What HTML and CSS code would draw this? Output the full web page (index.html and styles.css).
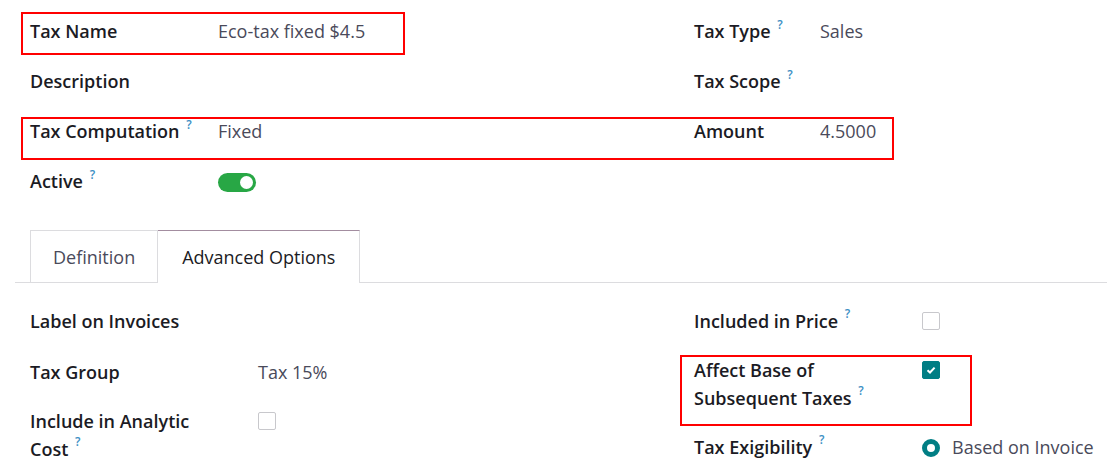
FILE: index.html
```html
<!DOCTYPE html>
<html lang="en">
<head>
    <meta charset="UTF-8">
    <title>Tax - Eco-tax fixed $4.5</title>
    <link rel="stylesheet" href="styles.css">
</head>
<body>
    <div class="sheet">
        <div class="group top">
            <div class="col">
                <div class="row"><span class="label">Tax Name</span><span class="value">Eco-tax fixed $4.5</span></div>
                <div class="row"><span class="label">Description</span><span class="value"></span></div>
                <div class="row"><span class="label">Tax Computation <sup class="tip">?</sup></span><span class="value">Fixed</span></div>
                <div class="row"><span class="label">Active <sup class="tip">?</sup></span><span class="value"><span class="toggle"></span></span></div>
            </div>
            <div class="col right">
                <div class="row"><span class="label">Tax Type <sup class="tip">?</sup></span><span class="value">Sales</span></div>
                <div class="row"><span class="label">Tax Scope <sup class="tip">?</sup></span><span class="value"></span></div>
                <div class="row"><span class="label">Amount</span><span class="value">4.5000</span></div>
            </div>
        </div>

        <div class="tabs">
            <div class="tab">Definition</div>
            <div class="tab active">Advanced Options</div>
        </div>

        <div class="group bottom">
            <div class="col">
                <div class="row first"><span class="label">Label on Invoices</span><span class="value"></span></div>
                <div class="row"><span class="label">Tax Group</span><span class="value">Tax 15%</span></div>
                <div class="row"><span class="label"><span>Include in Analytic</span> <span>Cost</span> <sup class="tip">?</sup></span><span class="value"><span class="check"></span></span></div>
            </div>
            <div class="col right">
                <div class="row"><span class="label">Included in Price <sup class="tip">?</sup></span><span class="value"><span class="check"></span></span></div>
                <div class="row"><span class="label"><span>Affect Base of</span> <span>Subsequent Taxes</span> <sup class="tip">?</sup></span><span class="value"><span class="check on"><svg width="10" height="8" viewBox="0 0 10 8"><path d="M1.5 4.2 L4 6.5 L8.6 1.6" fill="none" stroke="#fff" stroke-width="2"/></svg></span></span></div>
                <div class="row"><span class="label">Tax Exigibility <sup class="tip">?</sup></span><span class="value"><span class="radio"></span>Based on Invoice</span></div>
            </div>
        </div>

        <div class="mark mark-name"></div>
        <div class="mark mark-amount"></div>
        <div class="mark mark-affect"></div>
    </div>
</body>
</html>
```

FILE: styles.css
```css
body {
    margin: 0;
    background: #fff;
    font-family: 'Open Sans', sans-serif;
    font-size: 18px;
    color: #1f1f2b;
}
.sheet {
    position: relative;
    padding-top: 18px;
}
.group {
    display: grid;
    grid-template-columns: 664px 1fr;
    padding-left: 30px;
}
.col {
    display: flex;
    flex-direction: column;
}
.row {
    display: flex;
    align-items: flex-start;
    line-height: 26px;
    margin-bottom: 24px;
}
.label {
    font-weight: 600;
    color: #1b1b24;
    width: 188px;
    flex-shrink: 0;
}
.right .label {
    width: 126px;
}
.value {
    color: #4a4a5a;
    min-height: 26px;
}
.tip {
    color: #3c8fc4;
    font-size: 12px;
    line-height: 1;
    font-weight: 600;
    vertical-align: top;
    position: relative;
    top: 1px;
    margin-left: 2px;
}

/* toggle */
.toggle {
    display: inline-block;
    width: 38px;
    height: 19px;
    border-radius: 10px;
    background: #28a745;
    position: relative;
    vertical-align: middle;
    margin-top: -2px;
}
.toggle::after {
    content: '';
    position: absolute;
    right: 3px;
    top: 3px;
    width: 13px;
    height: 13px;
    border-radius: 50%;
    background: #fff;
}

/* tabs */
.tabs {
    display: flex;
    margin: 12px 0 0 15px;
    padding-left: 15px;
    border-bottom: 1px solid #dcdcdf;
}
.tab {
    padding: 0 22px;
    height: 51px;
    line-height: 52px;
    border: 1px solid #dcdcdf;
    border-bottom: none;
    color: #4a4a5a;
    margin-bottom: -1px;
    background: #fff;
}
.tab.active {
    padding: 0 24px;
    color: #1b1b24;
    border-top: 1px solid #a38da0;
    border-left: none;
    height: 52px;
}

.bottom {
    padding-top: 24px;
}
.bottom .row {
    line-height: 28px;
    margin-bottom: 21px;
}
.bottom .row.first {
    margin-bottom: 23px;
}
.bottom .label {
    width: 195px;
    margin-right: 33px;
}
.bottom .right .label {
    width: 170px;
    margin-right: 58px;
}

/* checkbox & radio */
.check {
    display: inline-block;
    width: 18px;
    height: 18px;
    border: 1px solid #c8c8cc;
    border-radius: 2px;
    box-sizing: border-box;
    vertical-align: middle;
    margin-top: -4px;
}
.check.on {
    background: #017e84;
    border-color: #017e84;
    display: inline-flex;
    align-items: center;
    justify-content: center;
}
.radio {
    display: inline-block;
    width: 18px;
    height: 18px;
    border-radius: 50%;
    border: 5px solid #017e84;
    box-sizing: border-box;
    vertical-align: middle;
    margin: -3px 12px 0 0;
}

/* red annotation frames */
.mark {
    position: absolute;
    border: 2px solid #f00;
    box-sizing: border-box;
}
.mark-name {
    left: 21px;
    top: 12px;
    width: 384px;
    height: 43px;
}
.mark-amount {
    left: 21px;
    top: 117px;
    width: 873px;
    height: 43px;
}
.mark-affect {
    left: 680px;
    top: 355px;
    width: 292px;
    height: 71px;
}
```
